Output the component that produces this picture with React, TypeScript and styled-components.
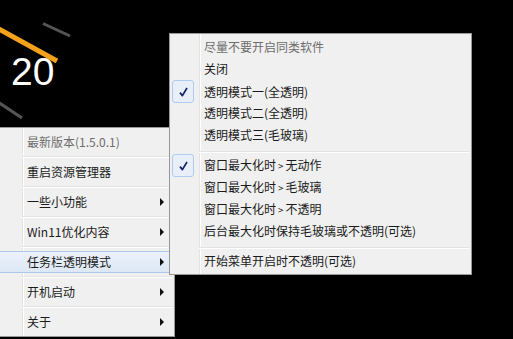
import React from "react";
import styled, { createGlobalStyle } from "styled-components";

const GlobalStyle = createGlobalStyle`
  html, body { margin: 0; padding: 0; background: #000; }
  body { font-family: "Noto Sans CJK SC", "Microsoft YaHei", sans-serif; }
`;

const Stage = styled.div`
  position: relative;
  width: 513px;
  height: 339px;
  overflow: hidden;
  background: #000;
`;

const ClockArt = styled.svg`
  position: absolute;
  left: 0;
  top: 0;
`;

const HourLabel = styled.div`
  position: absolute;
  left: 11px;
  top: 52px;
  font-family: "Liberation Sans", Arial, sans-serif;
  font-size: 39px;
  line-height: 1;
  color: #fff;
`;

const Menu = styled.div<{ $left: number; $top: number; $width: number; $padY: number }>`
  position: absolute;
  left: ${(p) => p.$left}px;
  top: ${(p) => p.$top}px;
  width: ${(p) => p.$width}px;
  box-sizing: border-box;
  border: 1px solid #979797;
  background: #f0f0f0;
  padding: ${(p) => p.$padY}px 2px;
  color: #1a1a1a;
  font-size: 12px;

  &::before {
    content: "";
    position: absolute;
    top: 0;
    bottom: 0;
    left: 29px;
    width: 1px;
    background: #e2e3e3;
    box-shadow: 1px 0 0 #fff;
  }
`;

const Item = styled.div<{ $h: number; $active?: boolean; $disabled?: boolean }>`
  position: relative;
  display: grid;
  grid-template-columns: 27px 1fr 20px;
  align-items: center;
  height: ${(p) => p.$h}px;
  line-height: 16px;
  color: ${(p) => (p.$disabled ? "#6d6d6d" : "#1a1a1a")};
  white-space: nowrap;

  &::after {
    content: "";
    display: ${(p) => (p.$active ? "block" : "none")};
    position: absolute;
    left: -3px;
    right: 0;
    top: 3px;
    bottom: 3px;
    box-sizing: border-box;
    border: 1px solid #a9c8ec;
    border-radius: 3px;
    background: linear-gradient(#ecf2fb, #dde8f6);
  }

  & > * {
    position: relative;
    z-index: 1;
  }
`;

const IconCell = styled.span`
  display: flex;
  align-items: center;
  height: 100%;
`;

const CheckBox = styled.span`
  width: 22px;
  height: 23px;
  box-sizing: border-box;
  border: 1px solid #aecbf0;
  border-radius: 3px;
  background: #e9eff9;
  display: flex;
  align-items: center;
  justify-content: center;
`;

const Label = styled.span`
  padding-left: 5px;
`;

const Arrow = styled.span`
  justify-self: end;
  margin-right: 8px;
  width: 0;
  height: 0;
  border-left: 4px solid #111;
  border-top: 4px solid transparent;
  border-bottom: 4px solid transparent;
`;

const Separator = styled.div<{ $above: number; $below: number }>`
  position: relative;
  margin: ${(p) => p.$above}px 0 ${(p) => p.$below}px 27px;
  height: 1px;
  background: #e2e3e3;
  border-bottom: 1px solid #fff;
`;

const Check = () => (
  <svg width="9" height="10" viewBox="0 0 9 10">
    <path d="M1 5.6 L3.4 8.6 L8 1" fill="none" stroke="#13236f" strokeWidth="1.7" strokeLinejoin="round" />
  </svg>
);

type Entry = { label: string; check?: boolean; disabled?: boolean } | "sep";

const subEntries: Entry[] = [
  { label: "尽量不要开启同类软件", disabled: true },
  { label: "关闭" },
  { label: "透明模式一(全透明)", check: true },
  { label: "透明模式二(全透明)" },
  { label: "透明模式三(毛玻璃)" },
  "sep",
  { label: "窗口最大化时 > 无动作", check: true },
  { label: "窗口最大化时 > 毛玻璃" },
  { label: "窗口最大化时 > 不透明" },
  { label: "后台最大化时保持毛玻璃或不透明(可选)" },
  "sep",
  { label: "开始菜单开启时不透明(可选)" },
];

const mainEntries = [
  { label: "最新版本(1.5.0.1)", disabled: true, sub: false },
  { label: "重启资源管理器", sub: false },
  { label: "一些小功能", sub: true },
  { label: "Win11优化内容", sub: true },
  { label: "任务栏透明模式", sub: true, active: true },
  { label: "开机启动", sub: true },
  { label: "关于", sub: true },
];

const GtLabel = ({ text }: { text: string }) => {
  const parts = text.split(" > ");
  if (parts.length === 1) return <>{text}</>;
  return (
    <>
      {parts[0]}
      <GtSign>&gt;</GtSign>
      {parts[1]}
    </>
  );
};

const GtSign = styled.span`
  display: inline-block;
  margin: 0 2px;
  font-size: 10px;
`;

export default function App() {
  return (
    <Stage>
      <GlobalStyle />
      <ClockArt width="120" height="130" viewBox="0 0 120 130">
        <line x1="-10" y1="24" x2="57" y2="61" stroke="#f5a11c" strokeWidth="5" />
        <line x1="43" y1="23.5" x2="70" y2="36" stroke="#555" strokeWidth="3" />
        <line x1="-2" y1="102" x2="22" y2="118" stroke="#555" strokeWidth="3" />
      </ClockArt>
      <HourLabel>20</HourLabel>

      <Menu $left={-8} $top={127} $width={183} $padY={0}>
        {mainEntries.map((e, i) => (
          <React.Fragment key={e.label}>
            {i > 0 && <Separator $above={0} $below={0} />}
            <Item $h={28} $active={e.active} $disabled={e.disabled}>
              <IconCell />
              <Label>{e.label}</Label>
              {e.sub ? <Arrow /> : <span />}
            </Item>
          </React.Fragment>
        ))}
      </Menu>

      <Menu $left={169} $top={33} $width={303} $padY={2}>
        {subEntries.map((e, i) =>
          e === "sep" ? (
            <Separator key={i} $above={5} $below={1} />
          ) : (
            <Item key={i} $h={22} $disabled={e.disabled}>
              <IconCell>
                {e.check && (
                  <CheckBox>
                    <Check />
                  </CheckBox>
                )}
              </IconCell>
              <Label>
                <GtLabel text={e.label} />
              </Label>
              <span />
            </Item>
          )
        )}
      </Menu>
    </Stage>
  );
}
